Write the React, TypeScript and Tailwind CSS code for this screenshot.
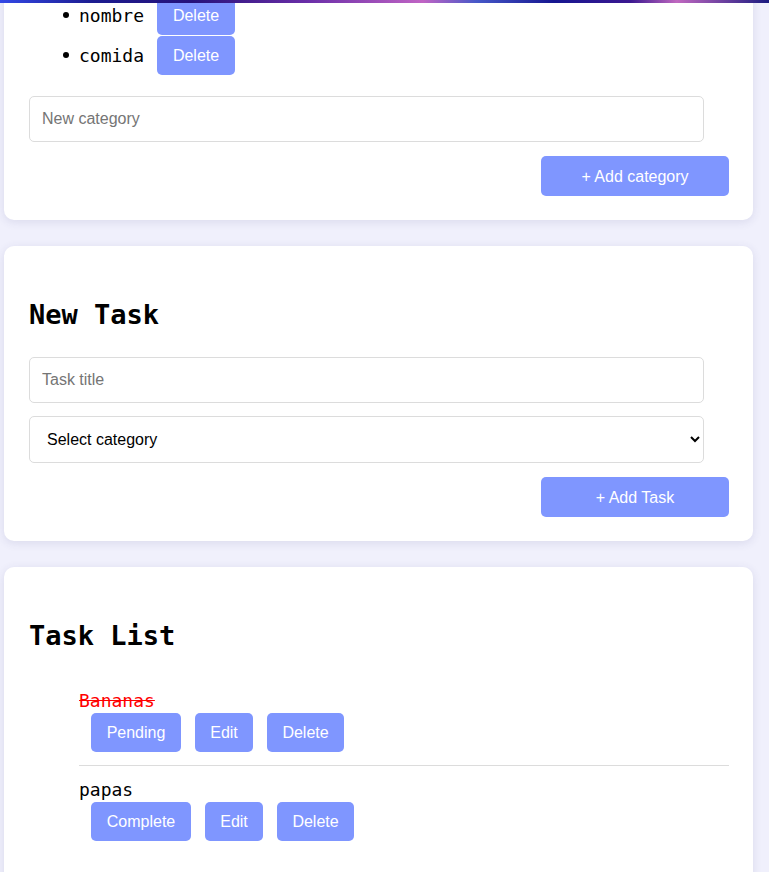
import React from "react";

const mono = "font-['DejaVu_Sans_Mono',monospace]";
const sans = "font-['Liberation_Sans',Arial,sans-serif]";

function Btn({ children, className = "" }: { children: React.ReactNode; className?: string }) {
  return (
    <button className={`h-[39px] px-[15px] rounded-[5px] bg-[#7f96ff] text-white text-[16px] leading-[19px] ${sans} ${className}`}>
      {children}
    </button>
  );
}

function Card({ children, className = "" }: { children: React.ReactNode; className?: string }) {
  return (
    <div className={`ml-[4px] w-[749px] bg-white rounded-[10px] shadow-[0_2px_10px_rgba(60,60,120,0.12)] pl-[25px] pr-[24px] ${className}`}>
      {children}
    </div>
  );
}

const categories = ["nombre", "comida"];

const tasks = [
  { title: "Bananas", done: true },
  { title: "papas", done: false },
];

export default function App() {
  return (
    <div className="relative h-[872px] overflow-hidden bg-[#f0f0fc]">
      <div className="absolute inset-x-0 top-0 z-10 h-[3px] bg-[linear-gradient(90deg,#3348e6_0%,#1c1c90_12%,#26127a_25%,#6a2ea8_40%,#c064c4_55%,#4658c8_62%,#161690_72%,#3b1890_82%,#c068c0_88%,#1a1a80_100%)]" />

      <Card className="rounded-t-none pb-[24px]">
        <ul className="-mt-[5px] pl-[34px]">
          {categories.map((c) => (
            <li key={c} className="flex h-[40px] items-center">
              <span className="mr-[10px] h-[6px] w-[6px] rounded-full bg-black" />
              <span className={`${mono} text-[18px] text-black`}>{c}</span>
              <Btn className="ml-[13px] w-[78px] px-0">Delete</Btn>
            </li>
          ))}
        </ul>
        <input
          placeholder="New category"
          className={`mt-[21px] block h-[46px] w-[675px] rounded-[5px] border border-[#dcdcdc] px-[12px] text-[16px] ${sans} text-black placeholder:text-[#757575] outline-none`}
        />
        <div className="mt-[14px] flex justify-end">
          <Btn className="h-[40px] w-[188px]">+ Add category</Btn>
        </div>
      </Card>

      <Card className="mt-[26px] pt-[53px] pb-[24px]">
        <h2 className={`${mono} text-[27px] font-bold leading-[32px] text-black`}>New Task</h2>
        <input
          placeholder="Task title"
          className={`mt-[26px] block h-[46px] w-[675px] rounded-[5px] border border-[#dcdcdc] px-[12px] text-[16px] ${sans} text-black placeholder:text-[#757575] outline-none`}
        />
        <select
          defaultValue=""
          className={`mt-[13px] block h-[47px] w-[675px] rounded-[5px] border border-[#dcdcdc] px-[13px] text-[16px] ${sans} text-black outline-none`}
        >
          <option value="">Select category</option>
        </select>
        <div className="mt-[14px] flex justify-end">
          <Btn className="h-[40px] w-[188px]">+ Add Task</Btn>
        </div>
      </Card>

      <Card className="mt-[26px] pt-[53px] pb-[30px]">
        <h2 className={`${mono} text-[27px] font-bold leading-[32px] text-black`}>Task List</h2>
        <ul className="mt-[25px] pl-[50px]">
          {tasks.map((t, i) => (
            <li
              key={t.title}
              className={`py-[13px] ${i < tasks.length - 1 ? "border-b border-[#dcdcdc]" : ""}`}
            >
              <div
                className={`${mono} text-[18px] leading-[21px] ${t.done ? "text-[#ff0000] line-through" : "text-black"}`}
              >
                {t.title}
              </div>
              <div className="mt-[2px] ml-[12px] flex gap-[14px]">
                <Btn className={t.done ? "w-[90px] px-0" : "w-[100px] px-0"}>{t.done ? "Pending" : "Complete"}</Btn>
                <Btn className="w-[58px] px-0">Edit</Btn>
                <Btn className="w-[77px] px-0">Delete</Btn>
              </div>
            </li>
          ))}
        </ul>
      </Card>
    </div>
  );
}
